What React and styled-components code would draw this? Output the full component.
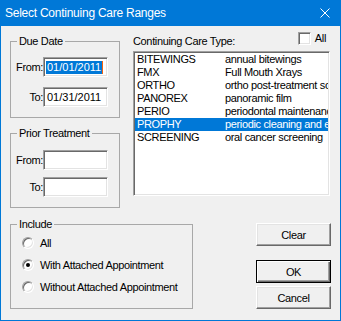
import React from "react";
import styled, { createGlobalStyle, css } from "styled-components";

const Global = createGlobalStyle`
  html, body { margin: 0; padding: 0; background: #f0f0f0; }
  body { font-family: "Liberation Sans", Arial, sans-serif; }
  * { box-sizing: border-box; }
`;

const Window = styled.div`
  width: 341px;
  height: 321px;
  background: #0078d7;
  padding: 0 1px 1px 1px;
  display: flex;
  flex-direction: column;
`;

const TitleBar = styled.div`
  height: 26px;
  flex: none;
  display: flex;
  align-items: center;
  padding-left: 4px;
  color: #fff;
  font-size: 12px;
`;

const TitleText = styled.div`
  flex: 1;
  letter-spacing: -0.25px;
`;

const CloseIcon = styled.svg`
  width: 10px;
  height: 10px;
  margin-right: 10px;
  display: block;
`;

const Body = styled.div`
  flex: 1;
  background: #f0f0f0;
  padding: 6px 9px 0 9px;
  display: flex;
  flex-direction: column;
  font-size: 11px;
  letter-spacing: -0.35px;
  color: #000;
`;

const TopRow = styled.div`
  display: flex;
  align-items: flex-start;
  gap: 13px;
`;

const LeftCol = styled.div`
  width: 110px;
  padding-top: 3px;
  display: flex;
  flex-direction: column;
  gap: 9px;
`;

const Group = styled.fieldset`
  margin: 0;
  padding: 0;
  border: 1px solid #a8a8a8;
  min-width: 0;
  width: ${(p) => p.$w}px;
  height: ${(p) => p.$h}px;
  display: block;
`;

const Legend = styled.legend`
  margin-left: 6px;
  padding: 0 2px;
  line-height: 13px;
  font-size: 11px;
`;

const Fields = styled.div`
  padding-top: ${(p) => p.$pt}px;
  display: flex;
  flex-direction: column;
  gap: ${(p) => p.$gap}px;
`;

const FieldRow = styled.div`
  display: grid;
  grid-template-columns: 32px 65px;
  align-items: center;
  height: 20px;
`;

const FieldLabel = styled.span`
  text-align: right;
  line-height: 13px;
`;

const sunken = css`
  border: 1px solid;
  border-color: #a0a0a0 #ffffff #ffffff #a0a0a0;
  box-shadow: inset 1px 1px 0 #696969, inset -1px -1px 0 #e3e3e3;
  background: #fff;
`;

const TextBox = styled.div`
  ${sunken};
  width: 65px;
  height: 20px;
  padding: 0 0 0 2px;
  display: flex;
  align-items: center;
  letter-spacing: 0;
  font-size: 11px;
  white-space: nowrap;
  overflow: hidden;
`;

const Selected = styled.span`
  background: #0078d7;
  color: #fff;
  line-height: 13px;
  padding: 0 1px;
`;

const Caret = styled.span`
  width: 1px;
  height: 13px;
  background: #f7630c;
`;

const PlainText = styled.span`
  padding: 0 1px;
  line-height: 13px;
`;

const RightCol = styled.div`
  width: 198px;
  display: flex;
  flex-direction: column;
`;

const Header = styled.div`
  height: 19px;
  display: flex;
  align-items: flex-start;
`;

const HeaderLabel = styled.span`
  margin-top: 3px;
  line-height: 13px;
`;

const CheckWrap = styled.label`
  margin-left: auto;
  margin-right: 5px;
  display: flex;
  align-items: flex-start;
  gap: 4px;
`;

const CheckBox = styled.span`
  ${sunken};
  width: 13px;
  height: 13px;
  display: block;
`;

const CheckLabel = styled.span`
  line-height: 13px;
`;

const ListBox = styled.div`
  ${sunken};
  width: 197px;
  height: 145px;
  padding: 1px 1px;
  overflow: hidden;
`;

const ListRow = styled.div`
  display: flex;
  height: 13px;
  line-height: 13px;
  padding-left: 2px;
  white-space: nowrap;
  overflow: hidden;
  background: ${(p) => (p.$sel ? "#0078d7" : "transparent")};
  color: ${(p) => (p.$sel ? "#fff" : "#000")};
`;

const Code = styled.span`
  width: 88px;
  flex: none;
`;

const Desc = styled.span`
  flex: none;
`;

const BottomRow = styled.div`
  display: flex;
  align-items: flex-start;
  margin-top: 10px;
`;

const Radios = styled.div`
  padding: 1px 0 0 11px;
  display: flex;
  flex-direction: column;
`;

const RadioRow = styled.label`
  height: 22px;
  display: flex;
  align-items: center;
  gap: 6px;
`;

const Radio = styled.span`
  width: 12px;
  height: 12px;
  border-radius: 50%;
  border: 1px solid;
  border-color: #a0a0a0 #ffffff #ffffff #a0a0a0;
  box-shadow: inset 1px 1px 0 #696969, inset -1px -1px 0 #e3e3e3;
  background: #fff;
  display: flex;
  align-items: center;
  justify-content: center;
  flex: none;
  &::after {
    content: "";
    width: 4px;
    height: 4px;
    border-radius: 50%;
    background: ${(p) => (p.$checked ? "#000" : "transparent")};
  }
`;

const ButtonCol = styled.div`
  margin-left: auto;
  padding-top: 5px;
  width: 75px;
  display: flex;
  flex-direction: column;
`;

const Button = styled.button`
  width: 75px;
  height: 23px;
  margin: 0 0 ${(p) => p.$mb || 0}px 0;
  padding: 0;
  font-family: inherit;
  font-size: 11px;
  letter-spacing: -0.35px;
  color: #000;
  background: #f0f0f0;
  border: 1px solid;
  border-color: ${(p) => (p.$default ? "#000" : "#ffffff #696969 #696969 #ffffff")};
  box-shadow: ${(p) =>
    p.$default
      ? "inset 1px 1px 0 #fff, inset -1px -1px 0 #696969, inset -2px -2px 0 #a0a0a0"
      : "inset -1px -1px 0 #a0a0a0, inset 1px 1px 0 #e3e3e3"};
`;

const items = [
  ["BITEWINGS", "annual bitewings"],
  ["FMX", "Full Mouth Xrays"],
  ["ORTHO", "ortho post-treatment screening"],
  ["PANOREX", "panoramic film"],
  ["PERIO", "periodontal maintenance"],
  ["PROPHY", "periodic cleaning and exam"],
  ["SCREENING", "oral cancer screening"],
];

export default function App() {
  return (
    <>
      <Global />
      <Window>
        <TitleBar>
          <TitleText>Select Continuing Care Ranges</TitleText>
          <CloseIcon viewBox="0 0 10 10">
            <path d="M0.5 0.5 L9.5 9.5 M9.5 0.5 L0.5 9.5" stroke="#fff" strokeWidth="1" />
          </CloseIcon>
        </TitleBar>
        <Body>
          <TopRow>
            <LeftCol>
              <Group $w={110} $h={83}>
                <Legend>Due Date</Legend>
                <Fields $pt={9} $gap={10}>
                  <FieldRow>
                    <FieldLabel>From:</FieldLabel>
                    <TextBox>
                      <Selected>01/01/2011</Selected>
                      <Caret />
                    </TextBox>
                  </FieldRow>
                  <FieldRow>
                    <FieldLabel>To:</FieldLabel>
                    <TextBox>
                      <PlainText>01/31/2011</PlainText>
                    </TextBox>
                  </FieldRow>
                </Fields>
              </Group>
              <Group $w={110} $h={81}>
                <Legend>Prior Treatment</Legend>
                <Fields $pt={10} $gap={7}>
                  <FieldRow>
                    <FieldLabel>From:</FieldLabel>
                    <TextBox />
                  </FieldRow>
                  <FieldRow>
                    <FieldLabel>To:</FieldLabel>
                    <TextBox />
                  </FieldRow>
                </Fields>
              </Group>
            </LeftCol>
            <RightCol>
              <Header>
                <HeaderLabel>Continuing Care Type:</HeaderLabel>
                <CheckWrap>
                  <CheckBox />
                  <CheckLabel>All</CheckLabel>
                </CheckWrap>
              </Header>
              <ListBox>
                {items.map(([c, d]) => (
                  <ListRow key={c} $sel={c === "PROPHY"}>
                    <Code>{c}</Code>
                    <Desc>{d}</Desc>
                  </ListRow>
                ))}
              </ListBox>
            </RightCol>
          </TopRow>
          <BottomRow>
            <Group $w={183} $h={91}>
              <Legend>Include</Legend>
              <Radios>
                <RadioRow>
                  <Radio />
                  All
                </RadioRow>
                <RadioRow>
                  <Radio $checked />
                  With Attached Appointment
                </RadioRow>
                <RadioRow>
                  <Radio />
                  Without Attached Appointment
                </RadioRow>
              </Radios>
            </Group>
            <ButtonCol>
              <Button $mb={14}>Clear</Button>
              <Button $default $mb={3}>OK</Button>
              <Button>Cancel</Button>
            </ButtonCol>
          </BottomRow>
        </Body>
      </Window>
    </>
  );
}
